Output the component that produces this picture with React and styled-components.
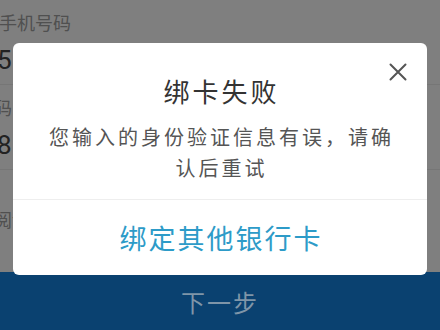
import React from "react";
import styled, { createGlobalStyle } from "styled-components";

const GlobalStyle = createGlobalStyle`
  html, body {
    margin: 0;
    padding: 0;
    background: #ffffff;
  }
  body {
    font-family: "Noto Sans CJK SC", "Noto Sans", sans-serif;
  }
`;

function App() {
  return (
    <>
      <GlobalStyle />
      <Page>
        <Form>
          <LabelRow>
            <Label shift={-1}>手机号码</Label>
          </LabelRow>
          <ValueRow>
            <Value shift={-3}>5</Value>
          </ValueRow>
          <LabelRow>
            <Label shift={-42}>验证码</Label>
          </LabelRow>
          <ValueRow>
            <Value shift={-3}>8</Value>
          </ValueRow>
          <AgreeRow>
            <Label shift={-24}>已阅读并同意《用户协议》</Label>
          </AgreeRow>
        </Form>
        <NextButton>下一步</NextButton>
        <Backdrop />
        <Dialog>
          <CloseButton aria-label="关闭">
            <svg width="18" height="18" viewBox="0 0 18 18">
              <path
                d="M1.5 1.5 L16.5 16.5 M16.5 1.5 L1.5 16.5"
                stroke="#555555"
                strokeWidth="2"
                strokeLinecap="round"
                fill="none"
              />
            </svg>
          </CloseButton>
          <DialogTitle>绑卡失败</DialogTitle>
          <DialogMessage>您输入的身份验证信息有误，请确认后重试</DialogMessage>
          <DialogAction>绑定其他银行卡</DialogAction>
        </Dialog>
      </Page>
    </>
  );
}

export default App;

const Page = styled.div`
  position: relative;
  width: 440px;
  height: 330px;
  overflow: hidden;
  display: flex;
  flex-direction: column;
  background: #ffffff;
`;

const Form = styled.div`
  flex: 1;
  display: flex;
  flex-direction: column;
`;

const LabelRow = styled.div`
  height: 43px;
  display: flex;
  align-items: center;
`;

const ValueRow = styled.div`
  height: 42px;
  box-sizing: border-box;
  padding-bottom: 8px;
  display: flex;
  align-items: center;
  border-bottom: 1px solid #ececec;
`;

const AgreeRow = styled.div`
  flex: 1;
  display: flex;
  align-items: center;
  padding-bottom: 4px;
`;

const Label = styled.span`
  margin-left: ${(p) => p.shift || 0}px;
  font-size: 18px;
  color: #a0a0a0;
  white-space: nowrap;
`;

const Value = styled.span`
  margin-left: ${(p) => p.shift || 0}px;
  font-family: "Roboto", "Noto Sans", sans-serif;
  font-size: 26px;
  line-height: 30px;
  color: #444444;
`;

const NextButton = styled.div`
  position: relative;
  z-index: 2;
  height: 58px;
  display: flex;
  align-items: center;
  justify-content: center;
  background: #0a4170;
  color: #7f95a8;
  font-size: 24px;
  letter-spacing: 2px;
`;

const Backdrop = styled.div`
  position: absolute;
  inset: 0;
  z-index: 1;
  background: rgba(0, 0, 0, 0.5);
`;

const Dialog = styled.div`
  position: absolute;
  z-index: 3;
  left: 13px;
  right: 13px;
  top: 43px;
  height: 232px;
  box-sizing: border-box;
  background: #ffffff;
  border-radius: 6px;
  display: flex;
  flex-direction: column;
  align-items: stretch;
  padding-top: 30px;
`;

const CloseButton = styled.div`
  position: absolute;
  top: 20px;
  right: 20px;
  width: 18px;
  height: 18px;
  display: flex;
`;

const DialogTitle = styled.div`
  height: 36px;
  line-height: 36px;
  text-align: center;
  font-size: 26px;
  letter-spacing: 3px;
  padding-left: 3px;
  color: #333333;
`;

const DialogMessage = styled.div`
  margin-top: 12px;
  padding: 0 30px 16px 33px;
  line-height: 31px;
  font-size: 20px;
  letter-spacing: 3px;
  text-align: center;
  color: #555555;
  border-bottom: 1px solid #eeeeee;
`;

const DialogAction = styled.div`
  flex: 1;
  display: flex;
  align-items: center;
  justify-content: center;
  font-size: 27px;
  letter-spacing: 2px;
  padding-left: 2px;
  color: #2d9bc8;
`;
